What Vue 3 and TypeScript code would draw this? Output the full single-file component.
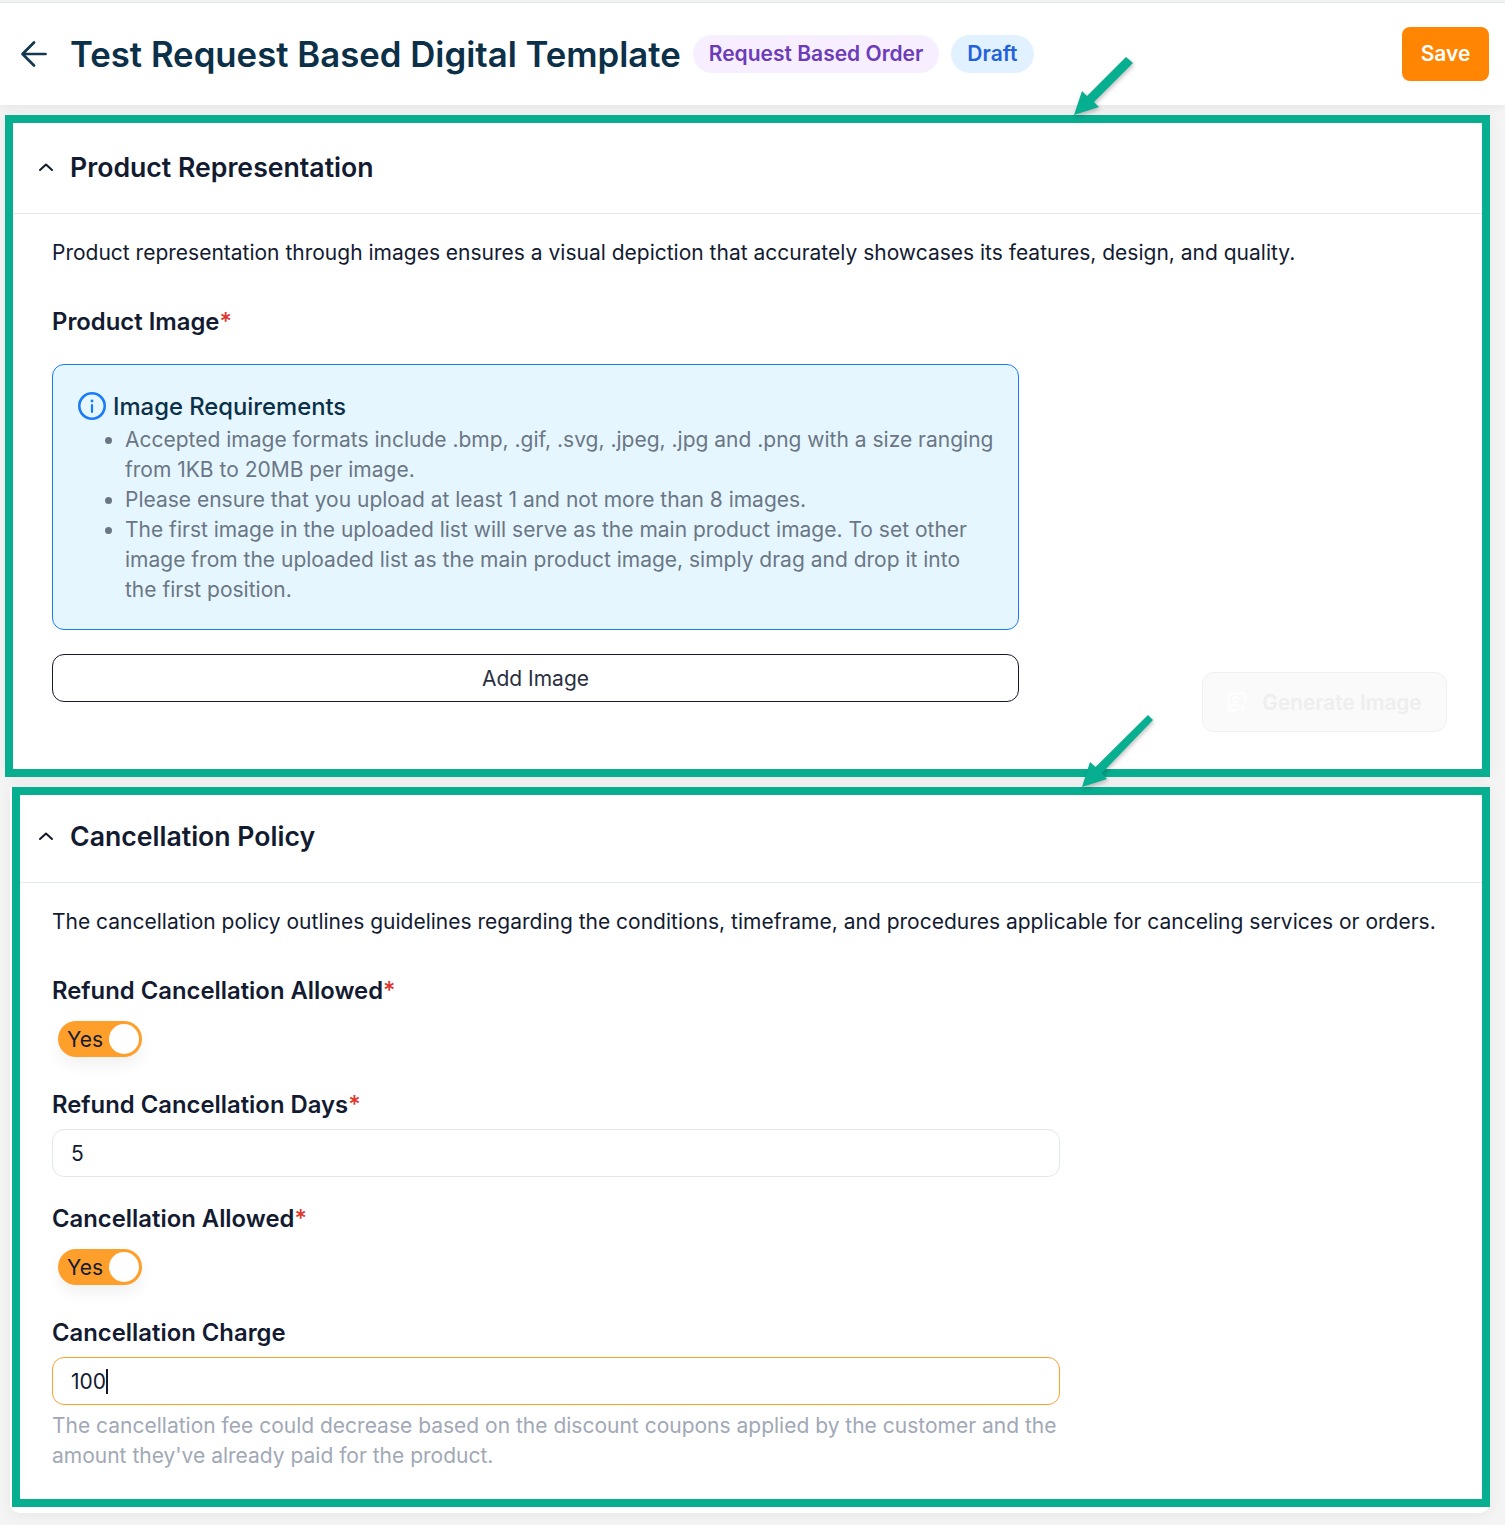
<script setup lang="ts">
const rules: string[] = [
  'Accepted image formats include .bmp, .gif, .svg, .jpeg, .jpg and .png with a size ranging from 1KB to 20MB per image.',
  'Please ensure that you upload at least 1 and not more than 8 images.',
  'The first image in the uploaded list will serve as the main product image. To set other image from the uploaded list as the main product image, simply drag and drop it into the first position.',
]
</script>

<template>
  <div class="page">
    <header class="topbar">
      <svg class="back" width="28" height="28" viewBox="0 0 28 28" fill="none" stroke="#12384f" stroke-width="2.7" stroke-linecap="round" stroke-linejoin="round">
        <path d="M25.5 14H3M14 2.5 2.500 14 14 25.500" />
      </svg>
      <h1 class="title">Test Request Based Digital Template</h1>
      <span class="pill pill-purple">Request Based Order</span>
      <span class="pill pill-blue">Draft</span>
      <button class="save">Save</button>
    </header>

    <section class="card card-one">
      <div class="card-head">
        <svg class="chev" width="16" height="10" viewBox="0 0 16 10" fill="none" stroke="#14192e" stroke-width="2" stroke-linecap="round" stroke-linejoin="round"><path d="M2 8 8 2.500l6 5.500" /></svg>
        <h2>Product Representation</h2>
      </div>
      <div class="card-body">
        <p class="desc">Product representation through images ensures a visual depiction that accurately showcases its features, design, and quality.</p>
        <div class="label label-image">Product Image<span class="req">*</span></div>
        <div class="notice">
          <div class="notice-title">
            <svg width="28" height="28" viewBox="0 0 28 28" fill="none" stroke="#1a7cf5"><circle cx="14" cy="14" r="12.700" stroke-width="2.600" /><path d="M14 13v7" stroke-width="2.200" stroke-linecap="round" /><circle cx="14" cy="9" r="1.400" fill="#1a7cf5" stroke="none" /></svg>
            <span>Image Requirements</span>
          </div>
          <ul>
            <li v-for="rule in rules" :key="rule">{{ rule }}</li>
          </ul>
        </div>
        <div class="action-row">
          <button class="add">Add Image</button>
          <button class="generate">
            <svg width="20" height="20" viewBox="0 0 20 20" fill="none" stroke="#ffffff" stroke-width="1.800" stroke-linecap="round" stroke-linejoin="round"><path d="M18.500 9V3.500a2 2 0 0 0-2-2h-13a2 2 0 0 0-2 2v13a2 2 0 0 0 2 2H10" /><circle cx="8.500" cy="7.500" r="2.700" /><path d="M3 18c.3-3.800 2.500-5.500 5.500-5.500 1.500 0 2.800.4 3.700 1.300" /><path d="M16 12.500c.3 2 1.200 3 3.500 3.500-2.300.5-3.200 1.500-3.500 3.500-.3-2-1.200-3-3.500-3.500 2.300-.5 3.200-1.500 3.500-3.500z" fill="#ffffff" stroke="none" /></svg>
            <span>Generate Image</span>
          </button>
        </div>
      </div>
    </section>

    <div class="card-wrap">
      <section class="card card-two">
        <div class="card-head">
          <svg class="chev" width="16" height="10" viewBox="0 0 16 10" fill="none" stroke="#14192e" stroke-width="2" stroke-linecap="round" stroke-linejoin="round"><path d="M2 8 8 2.500l6 5.500" /></svg>
          <h2>Cancellation Policy</h2>
        </div>
        <div class="card-body">
          <p class="desc">The cancellation policy outlines guidelines regarding the conditions, timeframe, and procedures applicable for canceling services or orders.</p>
          <div class="label label-first">Refund Cancellation Allowed<span class="req">*</span></div>
          <div class="toggle"><span>Yes</span><i></i></div>
          <div class="label label-next">Refund Cancellation Days<span class="req">*</span></div>
          <div class="field">5</div>
          <div class="label label-after-field">Cancellation Allowed<span class="req">*</span></div>
          <div class="toggle"><span>Yes</span><i></i></div>
          <div class="label label-next">Cancellation Charge</div>
          <div class="field field-focus">100<b class="caret"></b></div>
          <p class="hint">The cancellation fee could decrease based on the discount coupons applied by the customer and the amount they've already paid for the product.</p>
        </div>
      </section>
    </div>

    <svg class="arrow arrow-one" width="62" height="62" viewBox="0 0 62 62"><path d="M53 2 60 8 21 47l5 5L1 60 9 36l5 5z" fill="#07ae90" /></svg>
    <svg class="arrow arrow-two" width="74" height="76" viewBox="0 0 74 76"><path d="M67 2 72 7 21 60l5 6L1 74 9 49l5.500 5z" fill="#07ae90" /></svg>
  </div>
</template>

<style>
html, body { margin: 0; background: #f3f3f3; }
</style>

<style scoped>
* { box-sizing: border-box; }
.page {
  position: relative;
  width: 1505px;
  height: 1525px;
  overflow: hidden;
  padding-top: 2px;
  background: #f4f4f4;
  font-family: Inter, "Liberation Sans", sans-serif;
  color: #131b31;
}
.topbar {
  display: flex;
  align-items: center;
  height: 103px;
  padding: 0 16px 0 20px;
  background: #fff;
  border-top: 1px solid #e4e9f1;
  box-shadow: 0 2px 8px rgba(0, 0, 0, 0.06);
}
.back { flex: none; }
.title {
  margin: 0 12px 1px 22px;
  font-size: 34.750px;
  line-height: 44px;
  font-weight: 600;
  color: #0b3048;
  white-space: nowrap;
}
.pill {
  display: flex;
  align-items: center;
  height: 38px;
  padding: 0 16px 1px;
  border-radius: 19px;
  font-size: 21px;
  font-weight: 600;
  white-space: nowrap;
}
.pill-purple { background: #f7efff; color: #6c3cb8; margin-right: 12px; }
.pill-blue { background: #e2f1ff; color: #1f63da; }
.save {
  margin-left: auto;
  width: 87px;
  height: 54px;
  padding: 0 0 1px;
  border: 0;
  border-radius: 8px;
  background: #ff8503;
  color: #fff;
  font: 600 21px Inter, sans-serif;
}
.card {
  background: #fff;
  border: 8px solid #07ae90;
}
.card-one {
  width: 1485px;
  height: 662px;
  margin: 10px 0 0 5px;
  box-shadow: 0 0 14px rgba(0, 0, 0, 0.05);
}
.card-wrap {
  width: 1480px;
  margin: 10px 0 0 10px;
  padding: 0 0 6px 2px;
  background: #fff;
  border-radius: 0 0 10px 10px;
  box-shadow: 0 2px 14px rgba(0, 0, 0, 0.06);
}
.card-two { height: 720px; }
.card-head {
  display: flex;
  align-items: center;
  height: 91px;
  padding: 0 0 2px 25px;
  border-bottom: 1px solid #e4e9f1;
}
.card-two .card-head { height: 88px; padding: 0 0 5px 18px; }
.chev { flex: none; margin-right: 16px; }
.card-head h2 {
  margin: 0;
  font-size: 26.650px;
  font-weight: 600;
  color: #131b31;
}
.card-body { padding: 24px 0 0 39px; }
.card-two .card-body { padding-left: 32px; }
.desc {
  margin: 0;
  font-size: 21px;
  line-height: 30px;
  white-space: nowrap;
}
.label {
  font-size: 23.850px;
  line-height: 30px;
  font-weight: 600;
  color: #131b31;
}
.label-image { margin-top: 39px; }
.label-first { margin-top: 39px; }
.label-next { margin-top: 33px; }
.label-after-field { margin-top: 27px; }
.req { color: #e0342e; font-weight: 500; }
.notice {
  width: 967px;
  height: 266px;
  margin-top: 27px;
  padding: 26px 24px 0 25px;
  background: #e5f6fe;
  border: 1px solid #1a7cf5;
  border-radius: 12px;
}
.notice-title {
  display: flex;
  align-items: center;
  gap: 7px;
  height: 30px;
  font-size: 23.800px;
  font-weight: 500;
  color: #0b3048;
}
.notice ul {
  margin: 4px 0 0;
  padding-left: 47px;
  font-size: 21px;
  line-height: 30px;
  color: #6b7685;
}
.action-row {
  display: flex;
  align-items: flex-start;
  justify-content: space-between;
  width: 1395px;
  margin-top: 24px;
}
.add {
  width: 967px;
  height: 48px;
  background: #fff;
  border: 1px solid #14192e;
  border-radius: 12px;
  color: #2a3040;
  font: 400 21px Inter, sans-serif;
}
.generate {
  display: flex;
  align-items: center;
  justify-content: center;
  gap: 15px;
  width: 245px;
  height: 60px;
  margin-top: 18px;
  background: #fafafa;
  border: 1px solid #f0f0f0;
  border-radius: 12px;
  color: #eeeeee;
  font: 600 20.800px Inter, sans-serif;
}
.toggle {
  display: flex;
  align-items: center;
  justify-content: space-between;
  width: 84px;
  height: 36px;
  margin: 15px 0 0 6px;
  padding: 0 3px 0 9px;
  background: #ff9f2b;
  border-radius: 18px;
  font-size: 21px;
  box-shadow: 0 8px 16px rgba(0, 0, 0, 0.06);
}
.toggle i {
  display: block;
  width: 30px;
  height: 30px;
  background: #fff;
  border-radius: 50%;
}
.field {
  display: flex;
  align-items: center;
  width: 1008px;
  height: 48px;
  margin-top: 9px;
  padding-left: 18px;
  background: #fff;
  border: 1px solid #e1e7f0;
  border-radius: 12px;
  font-size: 21px;
}
.field-focus { border-color: #ff9f2b; }
.caret {
  display: block;
  width: 2px;
  height: 25px;
  background: #14192e;
}
.hint {
  width: 1020px;
  margin: 6px 0 0;
  font-size: 21px;
  line-height: 30px;
  color: #a1a8b6;
}
.arrow {
  position: absolute;
  filter: drop-shadow(1px 2px 2px rgba(0, 0, 0, 0.25));
}
.arrow-one { left: 1073px; top: 55px; }
.arrow-two { left: 1081px; top: 713px; }
</style>
